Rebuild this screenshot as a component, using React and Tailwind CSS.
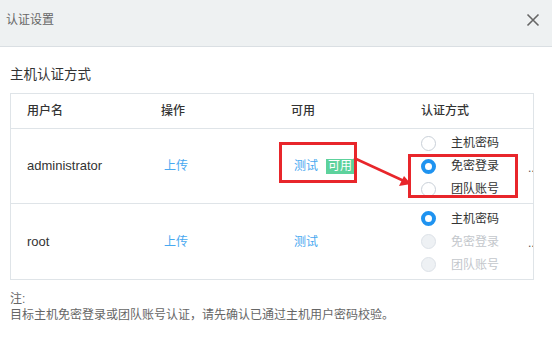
const FONT = { fontFamily: '"Liberation Sans", "Noto Sans CJK SC", sans-serif' }

const ROWS = [
  {
    user: 'administrator',
    ok: true,
    auth: [
      { label: '主机密码', checked: false, disabled: false },
      { label: '免密登录', checked: true, disabled: false },
      { label: '团队账号', checked: false, disabled: false },
    ],
  },
  {
    user: 'root',
    ok: false,
    auth: [
      { label: '主机密码', checked: true, disabled: false },
      { label: '免密登录', checked: false, disabled: true },
      { label: '团队账号', checked: false, disabled: true },
    ],
  },
]

function Radio({ label, checked, disabled }) {
  let circle = 'border border-[#c9d0d8] bg-white'
  if (checked) circle = 'border-[4px] border-[#1f93f0] bg-white'
  if (disabled) circle = 'border border-[#dde2e8] bg-[#eef1f4]'
  return (
    <div className="flex items-center h-[23px]">
      <span className={`w-[15px] h-[15px] rounded-full box-border shrink-0 ${circle}`} />
      <span className={`ml-[15px] text-[12px] ${disabled ? 'text-[#c3c7cc]' : 'text-[#333]'}`}>{label}</span>
    </div>
  )
}

export default function App() {
  return (
    <div className="w-[552px] h-[356px] bg-white relative overflow-hidden" style={FONT}>
      <div className="h-[47px] bg-[#eef1f2] border-b border-[#dadfe3] flex items-center justify-between pl-[6px] pr-[12px]">
        <span className="text-[12px] text-[#666] -mt-[6px]">认证设置</span>
        <svg width="14" height="14" viewBox="0 0 14 14" className="-mt-[6px]">
          <path d="M1.5 1.5 L12.5 12.5 M12.5 1.5 L1.5 12.5" stroke="#666" strokeWidth="1.6" />
        </svg>
      </div>

      <div className="px-[10px]">
        <div className="mt-[20px] text-[13.5px] text-[#333] leading-[16px]">主机认证方式</div>

        <div className="mt-[10px] w-[524px] border border-[#dfe4e8] overflow-hidden">
          <div className="grid grid-cols-[133px_130px_130px_130px] h-[35px] border-b border-[#dfe4e8] items-center text-[12px] font-medium text-[#333]">
            <span className="pl-[16px]">用户名</span>
            <span className="pl-[17px]">操作</span>
            <span className="pl-[17px]">可用</span>
            <span className="pl-[17px]">认证方式</span>
          </div>
          {ROWS.map((r, i) => (
            <div
              key={r.user}
              className={`grid grid-cols-[133px_130px_130px_130px] h-[75px] items-center text-[12px] ${i === 0 ? 'border-b border-[#dfe4e8]' : ''}`}
            >
              <span className="pl-[16px] text-[#333] text-[13px]">{r.user}</span>
              <span className="pl-[20px] text-[#48a8f0]">上传</span>
              <span className="pl-[20px] flex items-center">
                <span className="text-[#48a8f0]">测试</span>
                {r.ok && (
                  <span className="ml-[8px] bg-[#5dd29c] text-white px-[2px] h-[15px] leading-[15px]">可用</span>
                )}
              </span>
              <div className="pl-[17px] relative flex flex-col">
                {r.auth.map((a) => (
                  <Radio key={a.label} {...a} />
                ))}
                <span className="absolute left-[124px] top-[27px] text-[#555] text-[12px]">...</span>
              </div>
            </div>
          ))}
        </div>

        <div className="mt-[11px] text-[12px] text-[#666] leading-[16px]">
          <div>注:</div>
          <div>目标主机免密登录或团队账号认证，请先确认已通过主机用户密码校验。</div>
        </div>
      </div>

      <div className="absolute left-[279px] top-[142px] w-[78px] h-[41px] border-[3px] border-[#e8262b]" />
      <div className="absolute left-[408px] top-[154px] w-[110px] h-[44px] border-[3px] border-[#e8262b]" />
      <svg className="absolute left-0 top-0" width="552" height="356" viewBox="0 0 552 356">
        <line x1="354" y1="158" x2="404" y2="181" stroke="#e8262b" strokeWidth="2.5" />
        <path d="M411 184 L399 186 L404 176 Z" fill="#e8262b" />
      </svg>
    </div>
  )
}
